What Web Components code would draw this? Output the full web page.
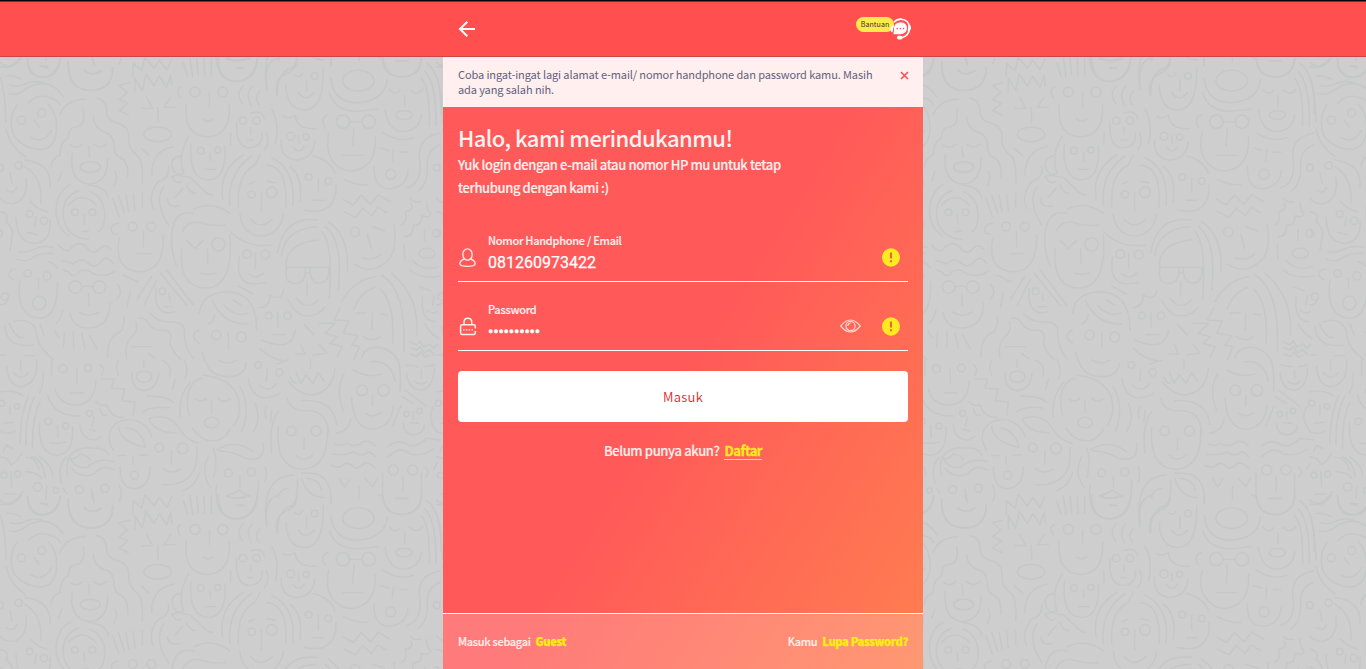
<!DOCTYPE html>
<html lang="id">
<head>
<meta charset="utf-8">
<title>Masuk</title>
<style>
html,body{margin:0;height:100%;overflow:hidden}
body{font-family:"Noto Sans CJK SC","Open Sans",sans-serif;color:#fff}
</style>
</head>
<body>
<login-page></login-page>
<script>
const define = (name, html) => {
  const t = document.createElement('template');
  t.innerHTML = html;
  customElements.define(name, class extends HTMLElement {
    constructor() {
      super();
      this.attachShadow({mode: 'open'}).appendChild(t.content.cloneNode(true));
    }
  });
};

// Repeating doodle of faces; drawn at three units per pixel.
const faces = `
<g>
<path d="M0 50Q40 60 64 25M82 25Q85 80 132 82Q176 80 180 25M120 47L142 54M205 35Q205 122 275 122Q338 120 338 55M275 22L282 45M253 63Q275 80 302 64"/>
<path d="M20 78Q40 74 64 88M0 80Q15 120 18 215M28 130Q50 140 85 112Q150 80 190 140M30 105Q50 115 80 100Q105 90 130 98"/>
<path d="M50 165Q22 210 42 258Q75 300 128 298Q170 290 170 230Q170 190 145 162M84 160Q110 130 145 142Q175 150 180 165M102 210L117 230M92 262Q130 285 155 240M18 238Q30 290 75 320"/><circle cx="64" cy="211" r="12"/><circle cx="125" cy="189" r="12"/>
<path d="M180 195Q195 150 255 147M250 177Q258 230 225 231Q205 232 205 265Q180 275 180 315Q155 325 153 350M290 145Q320 150 320 185Q320 210 350 218Q390 230 386 265Q382 295 415 320Q430 335 427 400M280 200Q282 235 310 245Q340 250 342 285Q340 315 365 325Q385 335 383 380M345 365Q355 380 342 408M185 365L175 392"/>
<path d="M210 285Q230 300 248 282M280 282Q300 300 320 282M265 290L269 320M216 312C210 370 230 402 272 402Q325 395 323 325"/><ellipse cx="271" cy="351" rx="30" ry="16"/>
<path d="M398 82L400 40L425 62L435 22L462 55L478 30L500 60L515 28M405 125L405 85L427 122L438 72L462 108L478 78L500 112L512 75L516 108M388 98L358 106L382 127L358 148L384 160L358 182L385 195M425 175L458 175L440 142M492 172L512 142M492 172L525 172M473 173L475 215"/><ellipse cx="473" cy="253" rx="41" ry="22"/>
<path d="M550 40L563 78M570 25L578 80M590 25L595 75M612 25L614 78M634 25L634 78M542 112Q525 120 540 142M558 162Q550 260 625 261Q692 255 688 165M628 128L628 170M610 208Q625 220 640 208"/><circle cx="585" cy="126" r="15"/><circle cx="668" cy="126" r="15"/>
<path d="M655 22Q655 95 710 95Q770 90 772 25M685 27Q705 38 733 27M710 53L730 55M730 108Q705 130 728 162M756 110Q735 135 754 166M780 124Q760 145 778 165M753 190Q785 178 793 205M710 215Q705 294 750 294Q790 290 786 248M752 232L752 252M742 270L760 270M815 177Q840 220 826 280M798 248Q812 275 794 300M692 250L692 285"/><circle cx="729" cy="212" r="11"/><circle cx="770" cy="212" r="11"/>
<path d="M800 110Q793 30 834 25M832 138Q820 90 856 72Q895 55 890 25M885 75Q897 88 908 70M858 105Q860 180 915 180Q972 178 970 55M920 90L920 122M895 128Q915 158 942 128M850 198Q865 210 885 195Q890 240 948 236M984 195Q958 205 976 234M844 270Q838 325 892 330Q940 325 944 275M895 258L897 280M880 292Q900 315 912 290"/><circle cx="944" cy="78" r="10"/><circle cx="872" cy="259" r="12"/><circle cx="919" cy="261" r="9"/>
<path d="M992 25L992 42M1135 22L1150 28M993 85Q1000 158 1075 158Q1155 152 1162 88M988 128Q1005 185 1075 184L1132 178M1062 234L1058 287M1047 215L1084 215M1028 316L1088 316M986 250C970 320 1010 363 1055 363Q1130 355 1126 260M1142 294L1167 302M1200 306L1222 307M1180 300L1177 333M1122 348Q1120 418 1172 416Q1220 410 1224 360M1032 388Q1065 405 1102 405"/><ellipse cx="1075" cy="92" rx="47" ry="31"/><circle cx="1029" cy="215" r="20"/><circle cx="1106" cy="215" r="20"/><circle cx="1172" cy="373" r="15"/>
<path d="M1149 25Q1150 82 1208 80Q1260 80 1265 25M1185 33L1225 33M1168 118Q1185 140 1200 121M1230 120Q1250 140 1268 118M1214 137L1214 168M1155 180Q1165 245 1212 245Q1260 240 1264 193M1148 248Q1200 280 1240 263M1264 85Q1290 110 1288 228M1275 65Q1310 100 1308 228M1280 40Q1325 70 1323 190M1320 250Q1255 262 1258 320Q1270 400 1222 413M1320 285Q1280 300 1282 345Q1285 400 1255 423"/><ellipse cx="1212" cy="195" rx="24" ry="13"/>
<path d="M75 330Q155 340 150 410M75 350Q130 385 122 458M78 385Q85 450 38 462Q10 460 0 445M30 368L36 400M20 420Q40 435 50 412M92 455Q115 480 142 485M48 502Q50 580 105 580Q155 575 150 510M108 500L105 528M82 547L112 554"/><circle cx="56" cy="346" r="11"/><circle cx="0" cy="353" r="10"/><circle cx="89" cy="492" r="10"/><circle cx="132" cy="512" r="11"/>
<path d="M210 404C155 430 155 530 208 558M236 422Q185 440 190 500Q200 565 265 568M265 405Q320 410 325 445M270 425C330 450 320 535 295 545M205 465Q245 420 288 465M252 495L254 523M246 545L265 542"/><circle cx="225" cy="487" r="10"/><circle cx="277" cy="487" r="10"/>
<path d="M338 445L357 500M355 435L373 490M378 435L386 485M400 432L405 482M427 430L427 472M355 520Q322 528 340 552L352 552M358 565Q340 665 425 665Q492 660 490 555M430 545L430 591M410 611L452 611"/><circle cx="398" cy="530" r="13"/><circle cx="454" cy="530" r="13"/>
<path d="M522 290Q455 300 455 375M566 260Q530 320 552 372M424 296L446 315M573 282Q565 390 627 390Q680 385 675 290M630 308L632 332M616 358L647 358M540 318Q505 325 520 360Q530 380 570 382Q590 400 605 415Q620 435 637 435M505 350Q510 385 475 395C450 425 450 455 460 475M550 370L515 380Q530 405 545 395M492 408Q460 455 505 525M548 415L526 442M560 405Q570 430 585 430M502 448Q505 475 537 468"/><circle cx="602" cy="302" r="10"/><circle cx="653" cy="300" r="9"/>
<path d="M668 448Q655 360 730 315M690 468Q680 370 755 318M715 470Q710 370 765 345L780 315M800 345Q865 350 857 470M815 323Q890 360 878 468M870 350Q910 380 900 455M746 402L764 395M802 394L825 398M784 428L784 485M752 507Q780 542 816 508M720 492C725 580 840 580 850 492M692 546Q740 595 815 585"/><circle cx="755" cy="433" r="11"/><circle cx="815" cy="427" r="16"/>
<path d="M940 318Q990 330 1005 370M955 385L955 425M940 451L970 451M912 480Q1010 500 1008 405"/><circle cx="926" cy="381" r="10"/><circle cx="985" cy="393" r="10"/>
<path d="M582 478Q635 450 690 490M548 545Q565 505 610 520Q640 530 675 525M580 490Q510 475 515 585Q520 630 532 650M546 595Q535 714 620 714Q700 710 690 555M560 572L585 595L609 572M622 597L623 640M602 670Q620 675 648 670"/><circle cx="655" cy="583" r="20"/>
<path d="M718 620Q705 700 760 702L796 698M766 609L766 655M745 672Q770 690 790 670"/><circle cx="741" cy="612" r="13"/><circle cx="796" cy="614" r="13"/>
<path d="M832 610Q850 495 955 510M844 618Q855 535 950 530M858 650Q855 580 955 570M965 545Q1000 580 988 745M975 530Q1030 570 1015 720M985 515Q1050 560 1042 665M858 652L987 652M860 655Q850 700 887 700Q918 700 916 655M930 655Q930 700 960 700Q990 695 986 655M916 668L930 668M922 695L921 737M890 745Q920 785 954 750M865 750Q890 800 925 798Q960 795 973 772"/>
<path d="M1030 448L1060 465L1083 435L1112 463L1135 434L1170 455M1032 485L1067 502L1088 474L1115 498L1133 472L1160 488M1118 530L1153 542M1102 552L1114 595M1085 623Q1120 635 1144 612M1065 643Q1120 680 1170 625Q1192 590 1182 525"/><circle cx="1065" cy="546" r="14"/>
<path d="M1230 445Q1240 460 1262 455M1232 460Q1245 480 1215 485Q1225 510 1205 525M1280 455Q1280 480 1292 490Q1290 505 1265 498Q1265 530 1240 525Q1240 560 1215 560M1274 540L1274 572M1212 582L1214 625M1238 632Q1270 665 1315 650M1230 660Q1265 690 1320 678"/><circle cx="1310" cy="550" r="12"/><ellipse cx="1281" cy="610" rx="24" ry="15"/>
<path d="M0 485Q30 490 18 515Q45 540 35 565Q35 580 30 600M0 540Q15 550 0 562M55 605Q80 610 100 598Q130 585 160 592M50 628Q80 640 105 618Q130 608 158 610M175 585Q200 615 215 592Q240 570 260 592Q280 620 300 595Q315 580 330 595M187 632Q205 635 220 642Q245 620 262 638Q285 660 305 632Q320 615 340 640M190 660L205 665Q220 690 240 662Q265 655 280 672Q315 680 330 672L342 665"/>
<path d="M145 635Q165 640 172 655M48 657Q25 655 28 680L40 688M60 690C50 760 70 805 120 805Q175 800 172 695M115 685L116 713M170 820Q185 800 188 780M0 765Q20 765 24 742"/><circle cx="83" cy="670" r="11"/><circle cx="141" cy="678" r="12"/><circle cx="118" cy="759" r="20"/><circle cx="15" cy="740" r="11"/>
<path d="M245 712Q264 704 280 712M266 731L267 767M238 786Q265 805 298 786M210 790Q220 835 268 834Q330 830 330 760M352 703Q370 725 352 747M370 675L414 696M390 728L382 770"/><circle cx="226" cy="711" r="19"/><circle cx="298" cy="711" r="19"/>
<path d="M454 680L412 747M470 690L432 765M482 670L560 765M500 660L580 765M468 715Q460 785 505 789L525 785M507 730L510 752M492 770L520 770M715 708L760 732"/><circle cx="487" cy="724" r="10"/>
<path d="M598 790Q605 725 685 725Q770 730 770 840M637 752Q670 825 745 822M672 765Q705 803 742 790M700 750L722 764M645 795Q640 815 625 822M597 840Q565 855 597 880M685 848L686 897M607 907L613 930"/><circle cx="649" cy="855" r="14"/><circle cx="724" cy="861" r="15"/>
<path d="M850 720Q850 745 825 742Q815 740 810 735Q810 770 780 773M833 788L834 830M818 854L856 854M785 870Q875 910 886 840M780 895Q810 925 850 933M912 823L942 855"/><circle cx="806" cy="797" r="10"/><circle cx="863" cy="797" r="11"/>
<path d="M1025 755Q1060 690 1125 680M1062 778Q1080 725 1123 713M1142 718Q1185 760 1178 880M1145 675Q1220 720 1212 905M1175 670Q1260 740 1250 855M1070 790L1100 788M1142 792L1162 795M1117 790L1116 837M1088 858Q1115 880 1140 860M1085 925Q1090 893 1135 892Q1180 900 1192 930"/>
<path d="M1020 775L1002 810L1046 813L1030 850L1075 857L1055 885L1078 890L1062 930M958 820L1005 820L975 850L1010 860L990 880L1026 890L1012 920M958 882L980 910L940 915M888 912L915 912L902 882M1230 875L1250 885L1260 872L1270 890L1290 882L1300 895L1312 884M1232 893L1250 900L1260 890L1272 908L1290 900L1302 915M1232 912L1250 920L1262 905L1275 922L1288 915"/>
<path d="M1260 710L1292 722M1302 738L1298 765M1280 780Q1300 795 1310 785M1268 740Q1260 810 1305 815M1275 822Q1290 850 1315 865"/>
<path d="M15 830Q20 895 100 885M28 820Q50 870 70 862M40 815Q100 800 110 850Q110 890 160 928M120 822L132 855M0 915L18 915M75 917L103 917M165 845L177 863M193 848L190 890M220 845L221 895M245 850L255 895M268 855L292 898M372 800Q375 845 350 850Q320 870 323 920M408 815Q415 840 400 855Q370 880 380 925M415 805Q435 800 445 820Q460 845 495 840Q520 845 510 880Q520 910 542 928M450 790Q475 820 520 816Q560 820 553 855Q555 895 580 925M395 890L455 890M445 910L465 925"/>
</g>
<g transform="translate(0,930)">
<path d="M20 20Q25 80 65 80Q115 70 110 0M62 0L62 30M40 38Q65 65 85 38M130 40Q130 75 118 100M155 0L155 45M230 28L231 70M213 99L250 98M165 88Q180 137 230 135Q285 130 288 62M143 105Q160 170 240 168M300 15Q318 25 305 45M355 0Q345 20 355 45M395 40Q395 88 430 92Q470 90 476 40M430 0L432 22M485 0Q520 15 508 48M552 0Q568 30 555 55M525 58L517 90"/><circle cx="189" cy="26" r="12"/><circle cx="264" cy="24" r="11"/><ellipse cx="432" cy="50" rx="23" ry="17"/>
<path d="M305 57L342 57L335 84L374 87L366 123L405 126L400 165M288 125Q298 140 320 135Q335 175 370 172M240 195Q245 240 285 240L305 230M282 172L276 198M268 208L288 213M300 145Q302 168 320 165"/><circle cx="268" cy="160" r="9"/>
<path d="M0 95Q45 88 70 108M30 137L30 163M13 190L40 187M0 215Q25 225 42 215M85 108Q60 165 60 250M103 110Q75 170 78 255M120 125Q95 175 98 265M118 190Q115 285 172 286Q222 280 218 200M172 197L174 232M150 248Q175 253 198 246"/><circle cx="5" cy="130" r="9"/><circle cx="51" cy="139" r="8"/><circle cx="145" cy="184" r="10"/><circle cx="197" cy="198" r="9"/>
<path d="M340 270Q320 240 330 215C350 160 440 170 455 230M355 200Q360 245 435 262Q435 240 415 220Q400 205 380 205M355 287L378 286M420 286L445 284M398 289L399 312M360 322Q360 388 405 386Q450 380 450 320M448 178Q460 215 528 220M450 175Q500 160 530 195Q555 240 595 250M515 272L514 311M488 325Q510 345 540 328M488 374Q600 380 590 262M598 338Q585 380 550 392"/><circle cx="403" cy="346" r="12"/><circle cx="478" cy="263" r="13"/><circle cx="548" cy="265" r="16"/>
<path d="M615 0Q630 50 685 50Q735 48 738 10M655 0Q685 18 710 0M540 170Q535 105 570 68M568 165C550 100 575 60 605 55M612 46C735 60 730 160 702 195M587 117Q605 130 620 115M655 115Q670 132 690 117M635 122L635 158M578 205C610 255 665 255 690 208M720 80Q755 145 725 215M765 130Q785 175 760 215M440 109Q495 105 520 127M430 155Q455 137 508 143M800 142Q790 155 798 175M815 150L812 185"/><ellipse cx="635" cy="188" rx="22" ry="16"/>
<path d="M745 55Q755 115 800 113Q825 110 840 100M802 28L799 63M777 75Q805 100 828 72M830 12L865 0M866 65Q900 105 935 105Q1000 95 1005 25M932 0L932 25M888 38L903 70L918 45L938 70L955 38L973 65M870 50Q880 70 890 70"/><circle cx="774" cy="15" r="10"/><circle cx="838" cy="37" r="11"/>
<path d="M650 270Q705 235 760 275M658 272Q700 275 725 290C775 310 795 290 790 250M625 290Q600 340 632 382M640 265Q655 300 640 355M720 348L720 380M678 408Q700 402 718 390Q735 405 750 408Q715 422 678 408M708 436L730 436M650 375Q640 476 712 476Q778 470 775 360M795 320Q803 340 795 365"/><circle cx="685" cy="339" r="12"/><circle cx="754" cy="336" r="12"/>
<path d="M862 115Q870 150 910 152Q980 145 985 218M905 122Q1000 115 1010 195M835 155Q805 190 815 280M835 200Q825 325 907 328Q985 325 982 210M913 233L912 267M888 285Q910 310 937 285M800 500Q780 350 880 345M892 360Q895 440 865 440Q830 460 832 520M835 415Q835 390 865 385M905 355Q920 410 972 413M905 340Q1000 330 993 430M920 355Q960 360 965 390"/><circle cx="874" cy="213" r="14"/><circle cx="948" cy="213" r="15"/>
<path d="M1060 30Q1100 55 1145 42M1115 5Q1175 0 1185 65M1195 0Q1205 50 1200 95M1032 42Q1005 90 1030 152M1055 115Q1060 207 1120 208Q1175 200 1180 138M1118 105L1117 137M1098 160Q1115 175 1143 158M1010 220Q1050 210 1052 175M1202 138L1178 198M1215 90L1278 138M1205 110L1240 130"/><circle cx="1086" cy="91" r="16"/><circle cx="1151" cy="91" r="17"/>
<path d="M1220 15L1255 20M1275 20L1303 15M1264 30L1264 55M1245 65Q1265 80 1280 65M1220 40Q1225 90 1265 90Q1300 85 1303 25M1240 155L1240 178M1230 188L1255 190M1210 190Q1210 223 1240 225Q1275 220 1272 195M1300 140Q1280 175 1310 215"/><circle cx="1220" cy="162" r="8"/><circle cx="1259" cy="153" r="8"/>
<path d="M1005 252Q1025 260 1040 250Q1070 265 1090 245Q1110 240 1125 258M1000 283Q1040 288 1060 275Q1085 295 1105 275Q1120 280 1125 290M993 315Q1020 330 1035 310Q1055 310 1065 325Q1085 320 1095 308Q1115 310 1125 325M1165 258Q1195 235 1225 255Q1250 265 1280 235L1320 240M1165 290Q1200 255 1230 282Q1270 290 1300 267M1018 355L1033 382L1048 358M1095 355L1118 380L1132 355M1078 380L1077 416M1148 340L1148 405Q1155 464 1208 464Q1260 460 1264 405L1264 340M1209 350L1209 395M1190 415L1223 415M1275 320L1285 335L1278 350M1300 330L1310 310"/><circle cx="1180" cy="330" r="15"/><circle cx="1238" cy="330" r="15"/>
<path d="M0 290L20 295L35 315L50 302L65 280M10 275L20 255L38 265M33 335L35 380M15 402L48 402M0 420Q30 450 68 395M78 292Q110 295 118 330M95 290Q130 300 135 350M118 290Q160 320 158 348M78 335Q110 335 125 355M140 380L138 415M122 430L143 432M84 410C75 480 165 485 182 410M185 370Q170 320 198 292M203 345Q190 265 265 263Q320 262 325 285M215 325Q245 360 285 340Q310 310 342 330M240 282Q225 300 210 295Q225 325 260 322Q300 290 342 305M240 283Q265 285 270 300M205 420Q200 503 275 503Q340 500 338 435M275 387L282 424M253 442Q275 465 305 444M190 385L200 400M358 375Q370 400 358 425"/><circle cx="12" cy="346" r="9"/><circle cx="53" cy="342" r="9"/><circle cx="113" cy="381" r="13"/><circle cx="168" cy="391" r="8"/><circle cx="238" cy="389" r="12"/><circle cx="315" cy="385" r="12"/>
</g>`;
let copies = '';
for (let r = -1; r < 2; r++) for (let c = 0; c < 4; c++)
  copies += `<use href="#faces" x="${c*1310}" y="${r*1312.5}"/>`;

define('face-wallpaper', `
<style>:host{display:block;overflow:hidden;background:#cecece}svg{display:block}
#faces{fill:none;stroke:#c6c7c7;stroke-width:4.6;stroke-linecap:round;stroke-linejoin:round}</style>
<svg width="1366" height="619" viewBox="0 0 4098 1857"><defs><g id="faces">${faces}</g></defs>${copies}</svg>`);

define('help-badge', `
<style>:host{display:flex;align-items:flex-start;height:26px}
span{width:38px;height:15px;border-radius:8px;background:#ffe94c;color:#333;font-size:7px;line-height:15px;text-align:center;letter-spacing:.1px}
svg{margin-left:-5px}</style>
<span>Bantuan</span>
<svg width="24" height="25" viewBox="0 0 24 25" fill="none" stroke="#fff">
<path d="M5 5.3Q8 1.8 12.7 2.2Q20 3 20.5 10.5Q20.5 19 12 21" stroke-width="1.6"/>
<path d="M19.4 7.2Q22.3 8 22 11.5Q21.5 14 18.7 14.4Z" fill="#fff" stroke="none"/>
<path d="M5 8Q1 8.5 1.3 12.8Q1.5 15 3.4 15.6Z" fill="#fff" stroke="none"/>
<rect x="8" y="18.8" width="5.5" height="3.6" rx="1.6" fill="#fff" stroke="none"/>
<path d="M4.4 17.2L5 13Q4.2 5.6 11.5 5.2Q18 5.6 18 11.3Q17.6 17 11 17.3Z" fill="#fff" stroke="none"/>
<g fill="#ff4f4f" stroke="none"><circle cx="8.2" cy="11.6" r=".8"/><circle cx="11.4" cy="11.6" r=".8"/><circle cx="14.6" cy="11.6" r=".8"/></g>
</svg>`);

define('top-bar', `
<style>:host{display:flex;justify-content:center;box-sizing:border-box;height:57px;border-top:1px solid #050505;border-bottom:1px solid #c74646;background:#ff4f4f;box-shadow:inset 0 1px #812b2b}
div{box-sizing:border-box;width:480px;padding:0 10px 0 15px;display:flex;justify-content:space-between}
.back{display:block;margin-top:19px}help-badge{margin-top:16px}</style>
<div><svg class="back" width="19" height="18" viewBox="0 0 19 18" fill="none" stroke="#fff" stroke-width="2"><path d="M17 9H2.5M9.3 1.7L2 9L9.3 16.3"/></svg><help-badge></help-badge></div>`);

define('error-notice', `
<style>:host{display:flex;box-sizing:border-box;height:50px;padding:10px 14px 0 15px;justify-content:space-between;background:#ffefef;color:#62627b;font-size:11px;letter-spacing:-.11px;line-height:15px}
.text{white-space:pre}svg{margin-top:4px}</style>
<span class="text"><slot></slot></span>
<svg width="9" height="9" viewBox="0 0 9 9"><path d="M1 1L8 8M8 1L1 8" stroke="#f05258" stroke-width="1.6"/></svg>`);

define('input-row', `
<style>:host{display:flex;box-sizing:border-box;height:51px;border-bottom:1px solid #fff;padding-right:8px}
.icon{width:30px;padding-top:16px}.body{flex:1;display:flex;flex-direction:column}
.label{font-size:11px;line-height:18px;font-weight:500;white-space:nowrap;color:#fff0ef;letter-spacing:-.27px;-webkit-text-stroke:.15px}
.value{font:400 16px/24px Roboto,sans-serif;color:#fff;-webkit-text-stroke:.25px;padding-top:2px}
.side{display:flex;gap:21px;align-items:flex-start;padding-top:17px}
svg{display:block}</style>
<div class="icon"><slot name="icon"></slot></div>
<div class="body"><span class="label"><slot name="label"></slot></span><span class="value"><slot></slot></span></div>
<div class="side"><slot name="action"></slot>
<svg width="18" height="19" viewBox="0 0 18 19"><ellipse cx="9" cy="9.5" rx="9" ry="9.2" fill="#ffe923"/><path d="M9 4.5V10.6M9 12.3V14.2" stroke="#e96540" stroke-width="2"/></svg></div>`);

define('primary-button', `
<style>:host{display:block}button{display:block;width:100%;height:51px;border:0;border-radius:4px;background:#fff;color:#e01f2d;font:350 13px/49px "Noto Sans CJK SC",sans-serif;letter-spacing:.3px;padding:0}</style>
<button><slot></slot></button>`);

define('panel-footer', `
<style>:host{display:flex;justify-content:space-between;box-sizing:border-box;height:56px;padding:0 15px;border-top:1px solid #fff;background:rgba(255,255,255,.2);font-size:11px;line-height:55px;font-weight:500;color:#ffefe9;letter-spacing:-.31px;-webkit-text-stroke:.15px}
b{color:#ffee10;font-weight:900;margin-left:5px;letter-spacing:-.29px;-webkit-text-stroke:.25px}</style>
<span>Masuk sebagai<b>Guest</b></span><span>Kamu<b>Lupa Password?</b></span>`);

define('login-panel', `
<style>:host{display:flex;flex-direction:column;width:480px;height:612px;background:linear-gradient(122deg,#ff5959 50%,#ff7d50 98%)}
main{flex:1;padding:0 15px}
h1{margin:14px 0 0;font-size:22px;line-height:32px;font-weight:500;letter-spacing:-.56px;color:#fff3f2}
.lead{margin:0;font-size:13px;line-height:23px;font-weight:500;white-space:pre;color:#fff0ef;letter-spacing:-.39px;-webkit-text-stroke:.15px}
.one{margin-top:32px}.two{margin-top:18px}
primary-button{margin-top:20px}
.join{margin:17px 0 0;text-align:center;font-size:13px;line-height:24px;font-weight:500;color:#ffefed;letter-spacing:-.37px;-webkit-text-stroke:.15px}
.join b{display:inline-block;line-height:17px;margin-left:5px;color:#ffe923;font-weight:700;letter-spacing:-.45px;-webkit-text-stroke:.35px;border-bottom:1px solid #ffe923}
.dots{letter-spacing:-.2px;-webkit-text-stroke:.5px}svg{display:block}</style>
<error-notice>Coba ingat-ingat lagi alamat e-mail/ nomor handphone dan password kamu. Masih
ada yang salah nih.</error-notice>
<main>
<h1>Halo, kami merindukanmu!</h1>
<p class="lead">Yuk login dengan e-mail atau nomor HP mu untuk tetap
terhubung dengan kami :)</p>
<input-row class="one"><svg slot="icon" width="19" height="22" viewBox="0 0 19 22" fill="none" stroke="#ffe5e3" stroke-width="1.4"><ellipse cx="9.5" cy="7.5" rx="4.7" ry="5.6"/><path d="M6.3 12Q2 13.5 1.8 16.8Q2 19.4 9.5 19.4Q17 19.4 17.2 16.8Q17 13.5 12.7 12"/></svg>
<span slot="label">Nomor Handphone / Email</span>081260973422</input-row>
<input-row class="two"><svg slot="icon" width="20" height="22" viewBox="0 0 20 22" fill="none" stroke="#ffefed" stroke-width="1.5"><path d="M6 9V6.5Q6 2.2 9.9 2.2Q13.8 2.2 13.8 6.5V9M17.3 15V17Q17.3 18.6 15.7 18.6H4.2Q2.6 18.6 2.6 17V10.4Q2.6 8.8 4.2 8.8H15.7Q17.3 8.8 17.3 10.4V12.6"/><path d="M5 13.8H15" stroke-width="1.3" stroke-dasharray="1.6 1.2"/></svg>
<span slot="label">Password</span><span class="dots">••••••••••</span>
<svg slot="action" width="21" height="18" viewBox="0 0 21 18" fill="none" stroke="#ffd6d0" stroke-width="1.2"><path d="M.7 9Q10.5-3 20.3 9Q10.5 21 .7 9Z"/><circle cx="10.5" cy="9" r="4.6"/><path d="M7.8 9Q8 6.5 10.5 6.2"/></svg></input-row>
<primary-button>Masuk</primary-button>
<p class="join">Belum punya akun?<b>Daftar</b></p>
</main>
<panel-footer></panel-footer>`);

define('login-page', `
<style>:host{display:flex;flex-direction:column;height:669px;overflow:hidden}
.stage{position:relative;display:flex;justify-content:center;height:612px}
face-wallpaper{position:absolute;inset:-7px 0 0 0;z-index:0}login-panel{position:relative;z-index:1}top-bar{position:relative;z-index:2}</style>
<top-bar></top-bar><div class="stage"><face-wallpaper></face-wallpaper><login-panel></login-panel></div>`);
</script>
</body>
</html>
